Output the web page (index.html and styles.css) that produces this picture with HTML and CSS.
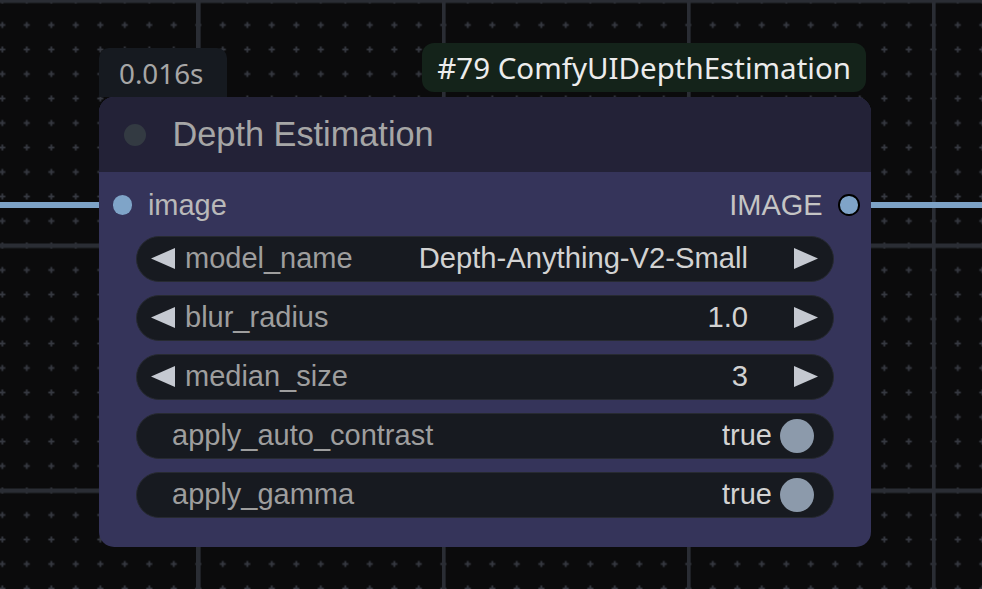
FILE: index.html
```html
<!DOCTYPE html>
<html lang="en">
<head>
<meta charset="utf-8">
<title>Depth Estimation</title>
<link rel="stylesheet" href="styles.css">
</head>
<body>
<div class="canvas">
  <svg class="grid" width="982" height="589" viewBox="0 0 982 589" aria-hidden="true">
    <defs>
      <pattern id="minor" patternUnits="userSpaceOnUse" width="24.5" height="24.5" x="-9.95" y="-11.75">
        <rect x="9.25" y="11.35" width="6" height="1.8" fill="#363941"/>
        <rect x="11.35" y="9.25" width="1.8" height="6" fill="#363941"/>
      </pattern>
      <pattern id="major" patternUnits="userSpaceOnUse" width="245" height="245" x="196" y="-1.5">
        <rect x="0" y="0" width="4.6" height="245" fill="#2a2d34"/>
        <rect x="0" y="0" width="245" height="4.5" fill="#2a2d34"/>
      </pattern>
    </defs>
    <rect width="982" height="589" fill="url(#minor)"/>
    <rect width="982" height="589" fill="url(#major)"/>
  </svg>

  <div class="link link-in"></div>
  <div class="link link-out"></div>

  <div class="node-wrap">
    <div class="badges">
      <div class="badge-time">0.016s</div>
      <div class="badge-id">#79 ComfyUIDepthEstimation</div>
    </div>
    <div class="node">
      <div class="node-title">
        <span class="title-dot"></span>
        <span class="title-text">Depth Estimation</span>
      </div>
      <div class="node-body">
        <div class="slots">
          <div class="slot slot-in"><span class="slot-dot"></span><span class="slot-label">image</span></div>
          <div class="slot slot-out"><span class="slot-label out-label">IMAGE</span><span class="slot-dot out-dot"></span></div>
        </div>
        <div class="widgets">
          <div class="widget combo">
            <svg class="arrow" width="24" height="21" viewBox="0 0 24 21"><polygon points="0,10.5 24,0 24,21" fill="#c5c9d1"/></svg>
            <span class="w-label">model_name</span>
            <span class="w-value">Depth-Anything-V2-Small</span>
            <svg class="arrow" width="24" height="21" viewBox="0 0 24 21"><polygon points="24,10.5 0,0 0,21" fill="#c5c9d1"/></svg>
          </div>
          <div class="widget combo">
            <svg class="arrow" width="24" height="21" viewBox="0 0 24 21"><polygon points="0,10.5 24,0 24,21" fill="#c5c9d1"/></svg>
            <span class="w-label">blur_radius</span>
            <span class="w-value">1.0</span>
            <svg class="arrow" width="24" height="21" viewBox="0 0 24 21"><polygon points="24,10.5 0,0 0,21" fill="#c5c9d1"/></svg>
          </div>
          <div class="widget combo">
            <svg class="arrow" width="24" height="21" viewBox="0 0 24 21"><polygon points="0,10.5 24,0 24,21" fill="#c5c9d1"/></svg>
            <span class="w-label">median_size</span>
            <span class="w-value">3</span>
            <svg class="arrow" width="24" height="21" viewBox="0 0 24 21"><polygon points="24,10.5 0,0 0,21" fill="#c5c9d1"/></svg>
          </div>
          <div class="widget toggle">
            <span class="w-label">apply_auto_contrast</span>
            <span class="w-value">true</span>
            <span class="knob"></span>
          </div>
          <div class="widget toggle">
            <span class="w-label">apply_gamma</span>
            <span class="w-value">true</span>
            <span class="knob"></span>
          </div>
        </div>
      </div>
    </div>
  </div>
</div>
</body>
</html>
```

FILE: styles.css
```css
* { box-sizing: border-box; }

html, body {
  margin: 0;
  padding: 0;
  background: #0b0b0c;
}

.canvas {
  position: relative;
  width: 982px;
  height: 589px;
  overflow: hidden;
  background: #0b0b0c;
  font-family: "Liberation Sans", Arial, sans-serif;
}

.grid {
  position: absolute;
  left: 0;
  top: 0;
  display: block;
}

.link {
  position: absolute;
  top: 202px;
  height: 6px;
  background: #7da2c6;
}
.link-in { left: 0; width: 100px; }
.link-out { left: 869px; width: 113px; }

.node-wrap {
  position: absolute;
  left: 98.5px;
  top: 43px;
  width: 772px;
  display: flex;
  flex-direction: column;
}

.badges {
  height: 54px;
  display: flex;
  justify-content: space-between;
  align-items: flex-end;
  font-family: "Noto Sans", "Open Sans", sans-serif;
}

.badge-time {
  height: 49px;
  width: 128.5px;
  padding-left: 20.5px;
  display: flex;
  align-items: center;
  background: #161a20;
  border-radius: 10px 10px 0 0;
  color: #a6a6a6;
  font-size: 27.8px;
}

.badge-id {
  height: 49px;
  margin: 0 4.5px 5px 0;
  padding: 0 15px;
  display: flex;
  align-items: center;
  background: #14231a;
  border-radius: 12px;
  color: #ececec;
  font-size: 29.5px;
}

.node {
  height: 450px;
  border-radius: 15px;
  background: #35345a;
  display: flex;
  flex-direction: column;
  overflow: hidden;
}

.node-title {
  height: 75px;
  flex: none;
  background: #232237;
  display: flex;
  align-items: center;
}

.title-dot {
  width: 22px;
  height: 22px;
  margin-left: 25.5px;
  border-radius: 50%;
  background: #333a42;
}

.title-text {
  margin-left: 26.5px;
  font-size: 34.3px;
  color: #a6a6a6;
}

.node-body {
  flex: 1;
  padding: 14px 0 0;
  display: flex;
  flex-direction: column;
}

.slots {
  height: 38px;
  display: flex;
  justify-content: space-between;
  align-items: center;
  padding: 0 10.8px 0 14px;
}

.slot {
  display: flex;
  align-items: center;
  font-size: 29px;
}

.slot-dot {
  width: 19.4px;
  height: 19.4px;
  border-radius: 50%;
  background: #7fa4c8;
}

.slot-in .slot-label {
  margin-left: 16px;
  color: #b9b9b9;
}

.out-label {
  margin-right: 15.6px;
  color: #c4c4c4;
}

.out-dot {
  width: 21.4px;
  height: 21.4px;
  border: 2.2px solid #000;
}

.widgets {
  margin-top: 11.5px;
  padding: 0 36.5px 0 37.5px;
  display: flex;
  flex-direction: column;
  gap: 13px;
}

.widget {
  height: 46px;
  border-radius: 23px;
  background: #171a20;
  border: 1px solid #272a31;
  display: flex;
  align-items: center;
  font-size: 29px;
}

.combo {
  padding: 0 15px 0 14px;
}

.arrow {
  flex: none;
  display: block;
}

.w-label {
  color: #9e9e9e;
  flex: 1;
}

.combo .w-label {
  margin-left: 10px;
}

.w-value {
  color: #d2d2d2;
}

.combo .w-value {
  margin-right: 46px;
  font-size: 29.2px;
}

.toggle {
  padding: 0 19px 0 35px;
}

.toggle .w-value {
  margin-right: 8px;
}

.knob {
  width: 34px;
  height: 34px;
  border-radius: 50%;
  background: #8c9aab;
}
```
